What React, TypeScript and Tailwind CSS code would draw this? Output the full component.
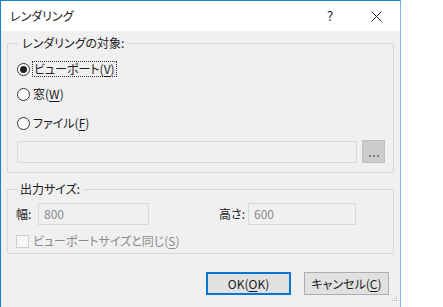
import React from "react";

const font = "font-['Noto_Sans_CJK_JP','Noto_Sans',sans-serif] [font-feature-settings:'palt']";

function Radio({ checked, label, mn, focus }: { checked?: boolean; label: string; mn: string; focus?: boolean }) {
  return (
    <div className="flex items-center gap-[2px]">
      <span className="flex h-[13px] w-[13px] items-center justify-center rounded-full border border-[#333] bg-white">
        {checked && <span className="h-[7px] w-[7px] rounded-full bg-[#222]" />}
      </span>
      <span className={focus ? "border border-dotted border-[#333] px-[1px] leading-[14px]" : "px-[1px] leading-[14px]"}>
        {label}(<span className="underline underline-offset-2">{mn}</span>)
      </span>
    </div>
  );
}

function Field({ value, className }: { value?: string; className: string }) {
  return (
    <div className={`flex h-[22px] items-center border border-[#d9d9d9] bg-[#f0f0f0] px-[5px] text-[#8a8a8a] ${className}`}>
      {value}
    </div>
  );
}

export default function App() {
  return (
    <div className={`${font} h-[307px] w-[443px] bg-white text-[12px] text-[#1a1a1a]`}>
      <div className="flex h-[307px] w-[401px] flex-col border-l border-t border-r border-l-[#1a7fd4] border-t-[#1a7fd4] border-r-[#7db3e6] bg-[#f0f0f0]">
        {/* title bar */}
        <div className="flex h-[30px] shrink-0 items-center bg-white pl-[9px]">
          <span className="flex-1">レンダリング</span>
          <span className="w-[46px] text-center text-[13px]">?</span>
          <span className="mr-[1px] flex w-[46px] justify-center">
            <svg width="11" height="11" viewBox="0 0 11 11">
              <path d="M0.5 0.5 L10.5 10.5 M10.5 0.5 L0.5 10.5" stroke="#222" strokeWidth="1" />
            </svg>
          </span>
        </div>

        <div className="flex flex-col px-[6px] pt-[3px]">
          <fieldset className="h-[139px] rounded-[1px] border border-[#d8d8d8] pl-[9px] pr-[8px]">
            <legend className="ml-[2px] px-[3px]">レンダリングの対象:</legend>
            <div className="mt-[9px] flex flex-col">
              <Radio checked label="ビューポート" mn="V" focus />
              <div className="mt-[10px]">
                <Radio label="窓" mn="W" />
              </div>
              <div className="mt-[15px]">
                <Radio label="ファイル" mn="F" />
              </div>
              <div className="mt-[10px] flex items-center gap-[5px]">
                <Field className="flex-1" />
                <div className="flex h-[23px] w-[23px] items-end justify-center border border-[#bfbfbf] bg-[#cccccc] pb-[5px]">
                  <span className="flex gap-[2px]">
                    <span className="h-[2px] w-[2px] bg-[#7a7a7a]" />
                    <span className="h-[2px] w-[2px] bg-[#7a7a7a]" />
                    <span className="h-[2px] w-[2px] bg-[#7a7a7a]" />
                  </span>
                </div>
              </div>
            </div>
          </fieldset>

          <fieldset className="mt-[7px] h-[74px] rounded-[1px] border border-[#d8d8d8] pl-[8px] pr-[37px]">
            <legend className="ml-[1px] px-[3px]">出力サイズ:</legend>
            <div className="mt-[5px] flex items-center">
              <span className="w-[22px]">幅:</span>
              <Field value="800" className="w-[111px]" />
              <span className="ml-[70px] w-[29px]">高さ:</span>
              <Field value="600" className="flex-1" />
            </div>
            <div className="mt-[7px] flex items-center gap-[4px] text-[#8a8a8a]">
              <span className="h-[13px] w-[13px] border border-[#cfcfcf] bg-[#f7f7f7]" />
              <span>
                ビューポートサイズと同じ(<span className="underline underline-offset-2">S</span>)
              </span>
            </div>
          </fieldset>
        </div>

        <div className="mt-[18px] flex justify-end gap-[13px] pr-[11px]">
          <button className="flex h-[23px] w-[85px] items-center justify-center border-2 border-[#0078d7] bg-[#e1e1e1]">
            OK(<span className="underline underline-offset-2">O</span>K)
          </button>
          <button className="flex h-[23px] w-[85px] items-center justify-center border border-[#adadad] bg-[#e1e1e1]">
            キャンセル(<span className="underline underline-offset-2">C</span>)
          </button>
        </div>
        <div className="mr-[2px] mt-[1px] flex justify-end">
          <svg width="7" height="7" viewBox="0 0 7 7">
            <rect x="5" y="0" width="1" height="1" fill="#b5b5b5" />
            <rect x="3" y="2" width="1" height="1" fill="#b5b5b5" />
            <rect x="5" y="2" width="1" height="1" fill="#b5b5b5" />
            <rect x="1" y="4" width="1" height="1" fill="#b5b5b5" />
            <rect x="3" y="4" width="1" height="1" fill="#b5b5b5" />
            <rect x="5" y="4" width="1" height="1" fill="#b5b5b5" />
          </svg>
        </div>
      </div>
    </div>
  );
}
